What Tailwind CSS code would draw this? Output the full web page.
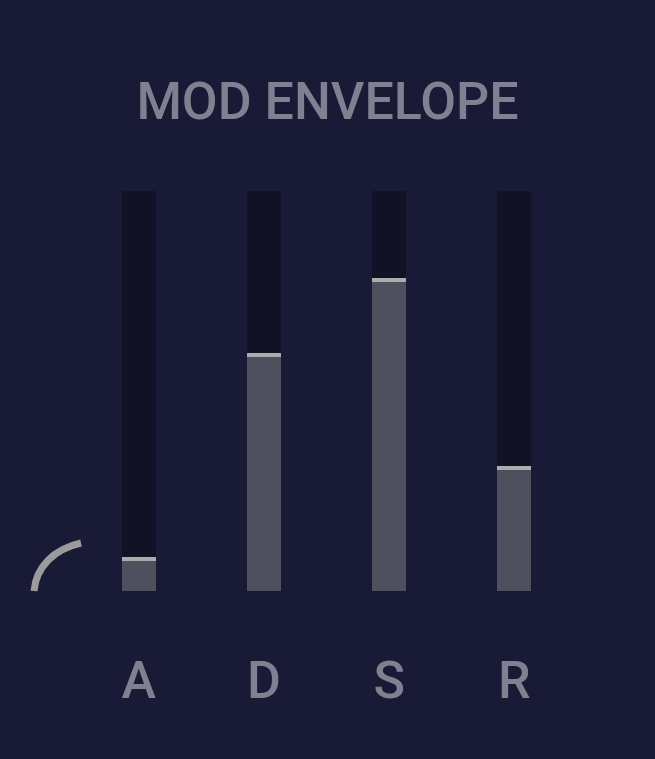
<!DOCTYPE html>
<html lang="en">
<head>
<meta charset="utf-8">
<meta name="viewport" content="width=device-width, initial-scale=1">
<title>Mod Envelope</title>
<script src="https://cdn.jsdelivr.net/npm/@tailwindcss/browser@4"></script>
</head>
<body class="min-h-screen bg-[#191a35] font-['Roboto',sans-serif] text-[#7f8090]">
<main class="pt-[70px] pb-9">
  <h1 class="text-center text-[52px] leading-16 font-medium whitespace-nowrap">MOD ENVELOPE</h1>
  <section aria-label="Mod envelope" class="mt-[57px] grid grid-cols-[76px_1fr_1fr_1fr_1fr_78px] justify-items-center gap-y-[58px]">
    <svg class="h-16 w-[88px] self-end justify-self-start overflow-visible" viewBox="0 0 88 64" fill="none" aria-hidden="true">
      <path d="M34 64C36 40 54 22 81 16" stroke="#9b9b9b" stroke-width="7"/>
    </svg>
    <input id="attack" type="range" min="0" max="100" step="0.5" value="7.5" style="background-size:100% 8%" class="m-0 h-[400px] w-[34px] appearance-none bg-[#111225] bg-[linear-gradient(#4e505d,#4e505d)] bg-bottom bg-no-repeat [direction:rtl] [writing-mode:vertical-lr] [&::-webkit-slider-thumb]:h-1 [&::-webkit-slider-thumb]:w-[34px] [&::-webkit-slider-thumb]:appearance-none [&::-webkit-slider-thumb]:bg-[#acacac]">
    <input id="decay" type="range" min="0" max="100" step="0.5" value="59" style="background-size:100% 59%" class="m-0 h-[400px] w-[34px] appearance-none bg-[#111225] bg-[linear-gradient(#4e505d,#4e505d)] bg-bottom bg-no-repeat [direction:rtl] [writing-mode:vertical-lr] [&::-webkit-slider-thumb]:h-1 [&::-webkit-slider-thumb]:w-[34px] [&::-webkit-slider-thumb]:appearance-none [&::-webkit-slider-thumb]:bg-[#acacac]">
    <input id="sustain" type="range" min="0" max="100" step="0.5" value="78" style="background-size:100% 78%" class="m-0 h-[400px] w-[34px] appearance-none bg-[#111225] bg-[linear-gradient(#4e505d,#4e505d)] bg-bottom bg-no-repeat [direction:rtl] [writing-mode:vertical-lr] [&::-webkit-slider-thumb]:h-1 [&::-webkit-slider-thumb]:w-[34px] [&::-webkit-slider-thumb]:appearance-none [&::-webkit-slider-thumb]:bg-[#acacac]">
    <input id="release" type="range" min="0" max="100" step="0.5" value="30.5" style="background-size:100% 31%" class="m-0 h-[400px] w-[34px] appearance-none bg-[#111225] bg-[linear-gradient(#4e505d,#4e505d)] bg-bottom bg-no-repeat [direction:rtl] [writing-mode:vertical-lr] [&::-webkit-slider-thumb]:h-1 [&::-webkit-slider-thumb]:w-[34px] [&::-webkit-slider-thumb]:appearance-none [&::-webkit-slider-thumb]:bg-[#acacac]">
    <label for="attack" class="col-start-2 text-[52px] leading-16 font-medium">A</label>
    <label for="decay" class="text-[52px] leading-16 font-medium">D</label>
    <label for="sustain" class="text-[52px] leading-16 font-medium">S</label>
    <label for="release" class="text-[52px] leading-16 font-medium">R</label>
  </section>
</main>
</body>
</html>
